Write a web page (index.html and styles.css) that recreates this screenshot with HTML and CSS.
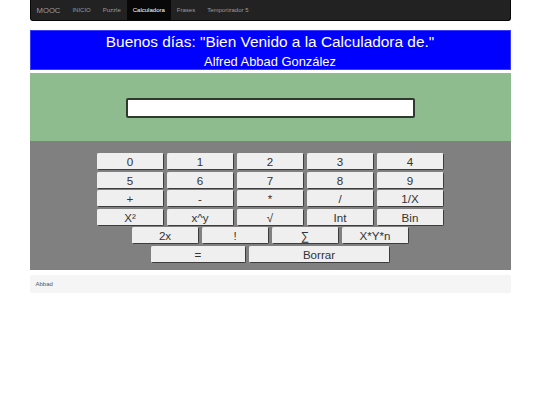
FILE: index.html
```html
<!DOCTYPE html>
<html lang="es">
<head>
<meta charset="utf-8">
<title>Calculadora</title>
<link rel="stylesheet" href="styles.css">
</head>
<body>
<div class="container">
  <nav class="navbar">
    <span class="brand">MOOC</span>
    <a class="nav-link">INICIO</a>
    <a class="nav-link">Puzzle</a>
    <a class="nav-link active">Calculadora</a>
    <a class="nav-link">Frases</a>
    <a class="nav-link">Temporizador 5</a>
  </nav>
  <header class="banner">
    <div class="title">Buenos días: "Bien Venido a la Calculadora de."</div>
    <div class="subtitle">Alfred Abbad González</div>
  </header>
  <section class="display">
    <input class="screen" type="text">
  </section>
  <section class="keypad">
    <div class="row">
      <button class="key">0</button><button class="key">1</button><button class="key">2</button><button class="key">3</button><button class="key">4</button>
    </div>
    <div class="row">
      <button class="key">5</button><button class="key">6</button><button class="key">7</button><button class="key">8</button><button class="key">9</button>
    </div>
    <div class="row">
      <button class="key">+</button><button class="key">-</button><button class="key">*</button><button class="key">/</button><button class="key">1/X</button>
    </div>
    <div class="row">
      <button class="key">X²</button><button class="key">x^y</button><button class="key">√</button><button class="key">Int</button><button class="key">Bin</button>
    </div>
    <div class="row">
      <button class="key">2x</button><button class="key">!</button><button class="key">∑</button><button class="key">X*Y*n</button>
    </div>
    <div class="row">
      <button class="key key-eq">=</button><button class="key key-clear">Borrar</button>
    </div>
  </section>
  <footer class="footer">Abbad</footer>
</div>
</body>
</html>
```

FILE: styles.css
```css
html, body {
  margin: 0;
  padding: 0;
  background: #ffffff;
  font-family: "Liberation Sans", Arial, sans-serif;
}

.container {
  width: 481px;
  margin: 0 auto;
}

.navbar {
  display: flex;
  align-items: stretch;
  height: 21px;
  background: #222222;
  border: 1px solid #080808;
  border-top: none;
  border-radius: 0 0 3px 3px;
  box-sizing: border-box;
  padding-left: 6px;
}

.brand {
  font-size: 7.7px;
  color: #9d9d9d;
  line-height: 21px;
  margin-right: 6px;
}

.nav-link {
  font-size: 6px;
  color: #9d9d9d;
  line-height: 21px;
  padding: 0 6px;
}

.nav-link.active {
  background: #080808;
  color: #ffffff;
}

.banner {
  margin-top: 9px;
  height: 40px;
  background: #0000ff;
  color: #ffffff;
  text-align: center;
  box-sizing: border-box;
  border: 1px solid #3a3aff;
  padding-top: 1.5px;
}

.title {
  font-size: 15.4px;
  line-height: 18px;
}

.subtitle {
  font-size: 12.9px;
  line-height: 15px;
  padding-top: 3.5px;
}

.display {
  margin-top: 3px;
  height: 68px;
  background: #8fbc8f;
  display: flex;
  justify-content: center;
  align-items: center;
}

.screen {
  width: 289px;
  height: 20px;
  box-sizing: border-box;
  border: 2px solid #2f3a2f;
  border-radius: 2px;
  background: #ffffff;
  margin: 0;
  padding: 0;
  margin-top: 1px;
}

.keypad {
  background: #808080;
  padding: 12px 0 7px;
  display: flex;
  flex-direction: column;
  align-items: center;
  gap: 1.6px;
}

.row {
  display: flex;
  gap: 3px;
}

.key {
  width: 67px;
  height: 17px;
  margin: 0;
  padding: 0;
  box-sizing: border-box;
  background: #efefef;
  border: 1px solid #efefef;
  border-right-color: #3c3c3c;
  border-bottom-color: #3c3c3c;
  border-radius: 2px;
  font-family: "Liberation Sans", Arial, sans-serif;
  font-size: 11.6px;
  color: #333333;
  line-height: 15px;
}

.key-eq {
  width: 95px;
}

.key-clear {
  width: 141px;
}

.footer {
  margin-top: 5px;
  height: 18px;
  background: #f5f5f5;
  border-radius: 2px;
  font-size: 6px;
  color: #555555;
  line-height: 18px;
  padding-left: 6px;
}
```
